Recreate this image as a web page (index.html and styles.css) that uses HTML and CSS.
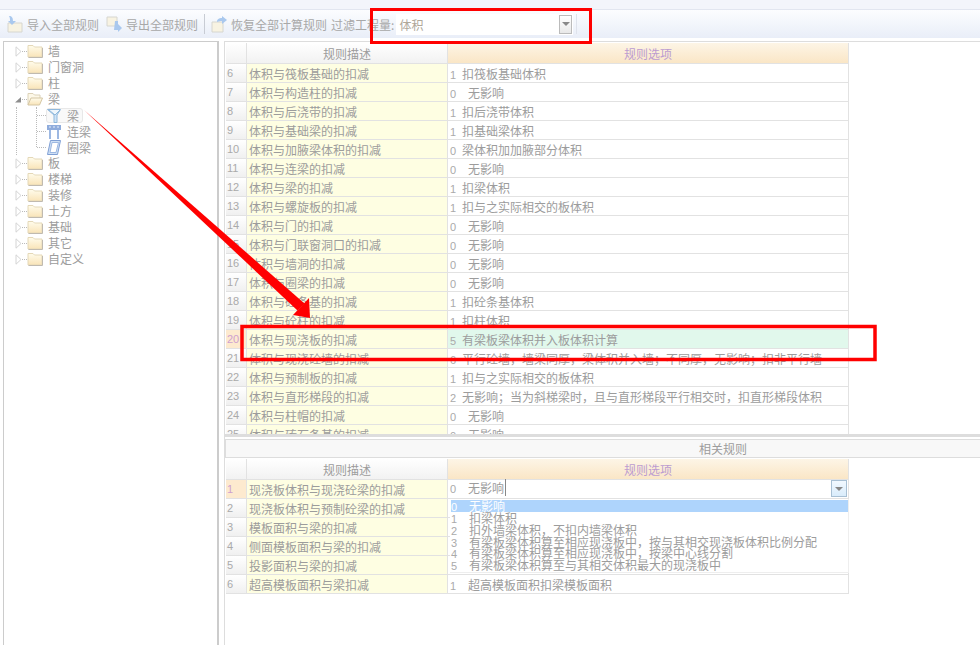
FILE: index.html
```html
<!DOCTYPE html>
<html lang="zh-CN">
<head>
    <meta charset="UTF-8">
    <title>计算规则</title>
    <link rel="stylesheet" href="styles.css">
</head>
<body>
    <svg class="defs" width="0" height="0">
        <defs>
            <linearGradient id="folderFill" x1="0" y1="0" x2="0" y2="1">
                <stop offset="0" stop-color="#fffcec"/>
                <stop offset="1" stop-color="#f9e4b8"/>
            </linearGradient>
            <symbol id="folder" viewBox="0 0 16 14">
                <path d="M1 3V1.500h5L7.500 3H15v10H1z" fill="url(#folderFill)" stroke="#e4d8b8"/>
                <path d="M1.500 13.500h14V4" fill="none" stroke="#c0bab0"/>
            </symbol>
            <symbol id="folderOpen" viewBox="0 0 16 14">
                <path d="M1 13V1.500h5L7.500 3H13v3" fill="#fdf8e8" stroke="#dcd2b8"/>
                <path d="M1 13l3-7h11.500l-3 7z" fill="url(#folderFill)" stroke="#d4c6a4"/>
            </symbol>
            <symbol id="closed" viewBox="0 0 7 11">
                <path d="M1 .8v9.400L6 5.500z" fill="#fff" stroke="#d4d4d4"/>
            </symbol>
        </defs>
    </svg>

    <div class="top-band"></div>

    <!-- Toolbar -->
    <div class="toolbar">
        <svg class="tool-icon" width="16" height="18" viewBox="0 0 16 18">
            <path d="M1 8h14v9H1z" fill="#f8f3e2" stroke="#d6d6d0"/>
            <path d="M2 1c3 0 4 2 4 5h3l-4 4-4-4h2c0-2 0-3-1-5z" fill="#a9c8ee"/>
        </svg>
        <span class="tool-text">导入全部规则</span>
        <svg class="tool-icon second" width="17" height="18" viewBox="0 0 17 18">
            <path d="M1 2h10v9H1z" fill="#f8f3e2" stroke="#d6d6d0"/>
            <path d="M9 6h3V9l4 4-4 4v-2H8z" fill="#a9c8ee"/>
        </svg>
        <span class="tool-text">导出全部规则</span>
        <span class="tool-sep"></span>
        <svg class="tool-icon third" width="16" height="18" viewBox="0 0 16 18">
            <path d="M1 7h11v10H1z" fill="#f8f3e2" stroke="#d6d6d0"/>
            <path d="M6 7c0-3 2-4 5-4V1l5 4-5 4V6C9 6 8 6 6 7z" fill="#a9c8ee"/>
        </svg>
        <span class="tool-text">恢复全部计算规则</span>
        <span class="tool-text filter-label">过滤工程量:</span>
        <div class="filter-combo">
            <span>体积</span>
            <span class="combo-btn"><b class="caret"></b></span>
        </div>
        <span class="tool-sep faint"></span>
    </div>

    <div class="main">
        <!-- Rule tree -->
        <div class="tree">
            <div class="node"><svg class="exp" width="7" height="11"><use href="#closed"/></svg><span class="dots"></span><svg class="fld" width="16" height="14"><use href="#folder"/></svg><span>墙</span></div>
            <div class="node"><svg class="exp" width="7" height="11"><use href="#closed"/></svg><span class="dots"></span><svg class="fld" width="16" height="14"><use href="#folder"/></svg><span>门窗洞</span></div>
            <div class="node"><svg class="exp" width="7" height="11"><use href="#closed"/></svg><span class="dots"></span><svg class="fld" width="16" height="14"><use href="#folder"/></svg><span>柱</span></div>
            <div class="node"><svg class="exp" width="7" height="11" viewBox="0 0 7 11"><path d="M0 8.500L6 3v5.500z" fill="#8d8d8d"/></svg><span class="dots"></span><svg class="fld" width="16" height="14"><use href="#folderOpen"/></svg><span>梁</span></div>
            <div class="children">
                <div class="leaves">
                    <div class="leaf">
                        <span class="hdots"></span>
                        <span class="leaf-box selected">
                            <svg width="14" height="15" viewBox="0 0 14 15"><path d="M.5 1.500h13L10 7v7.500H7V7z" fill="#cfe4f7" stroke="#8fb8dc"/><path d="M2 2l6 5 5-5" fill="#eef6fc" stroke="#8fb8dc"/></svg>
                            <span>梁</span>
                        </span>
                    </div>
                    <div class="leaf">
                        <span class="hdots"></span>
                        <span class="leaf-box">
                            <svg width="14" height="15" viewBox="0 0 14 15"><path d="M0 1h14v5H0z" fill="#8facdc"/><path d="M2 3h2M6 3h2M10 3h2" stroke="#e6eefa"/><path d="M3 6v9M11 6v9" stroke="#9db8e2" stroke-width="2"/></svg>
                            <span>连梁</span>
                        </span>
                    </div>
                    <div class="leaf">
                        <span class="hdots"></span>
                        <span class="leaf-box">
                            <svg width="14" height="15" viewBox="0 0 14 15"><path d="M3.500.5h10L10.500 14.500H.5z" fill="#cfe0f5" stroke="#7f9fd4"/><path d="M5 2.500h6.500L9 12.500H3z" fill="#fff" stroke="#9db8e2"/></svg>
                            <span>圈梁</span>
                        </span>
                    </div>
                </div>
            </div>
            <div class="node"><svg class="exp" width="7" height="11"><use href="#closed"/></svg><span class="dots"></span><svg class="fld" width="16" height="14"><use href="#folder"/></svg><span>板</span></div>
            <div class="node"><svg class="exp" width="7" height="11"><use href="#closed"/></svg><span class="dots"></span><svg class="fld" width="16" height="14"><use href="#folder"/></svg><span>楼梯</span></div>
            <div class="node"><svg class="exp" width="7" height="11"><use href="#closed"/></svg><span class="dots"></span><svg class="fld" width="16" height="14"><use href="#folder"/></svg><span>装修</span></div>
            <div class="node"><svg class="exp" width="7" height="11"><use href="#closed"/></svg><span class="dots"></span><svg class="fld" width="16" height="14"><use href="#folder"/></svg><span>土方</span></div>
            <div class="node"><svg class="exp" width="7" height="11"><use href="#closed"/></svg><span class="dots"></span><svg class="fld" width="16" height="14"><use href="#folder"/></svg><span>基础</span></div>
            <div class="node"><svg class="exp" width="7" height="11"><use href="#closed"/></svg><span class="dots"></span><svg class="fld" width="16" height="14"><use href="#folder"/></svg><span>其它</span></div>
            <div class="node"><svg class="exp" width="7" height="11"><use href="#closed"/></svg><span class="dots"></span><svg class="fld" width="16" height="14"><use href="#folder"/></svg><span>自定义</span></div>
        </div>

        <div class="rules">
            <!-- Rule grid -->
            <div class="upper">
                <table class="grid">
                    <colgroup><col class="c-num"><col class="c-desc"><col class="c-opt"></colgroup>
                    <thead>
                        <tr><th class="th-num"></th><th class="th-desc">规则描述</th><th class="th-opt">规则选项</th></tr>
                    </thead>
                    <tbody>
                        <tr><td class="num">6</td><td class="desc">体积与筏板基础的扣减</td><td class="opt"><i class="code">1</i>扣筏板基础体积</td></tr>
                        <tr><td class="num">7</td><td class="desc">体积与构造柱的扣减</td><td class="opt"><i class="code wide">0</i>无影响</td></tr>
                        <tr><td class="num">8</td><td class="desc">体积与后浇带的扣减</td><td class="opt"><i class="code">1</i>扣后浇带体积</td></tr>
                        <tr><td class="num">9</td><td class="desc">体积与基础梁的扣减</td><td class="opt"><i class="code">1</i>扣基础梁体积</td></tr>
                        <tr><td class="num">10</td><td class="desc">体积与加腋梁体积的扣减</td><td class="opt"><i class="code">0</i>梁体积加加腋部分体积</td></tr>
                        <tr><td class="num">11</td><td class="desc">体积与连梁的扣减</td><td class="opt"><i class="code wide">0</i>无影响</td></tr>
                        <tr><td class="num">12</td><td class="desc">体积与梁的扣减</td><td class="opt"><i class="code">1</i>扣梁体积</td></tr>
                        <tr><td class="num">13</td><td class="desc">体积与螺旋板的扣减</td><td class="opt"><i class="code">1</i>扣与之实际相交的板体积</td></tr>
                        <tr><td class="num">14</td><td class="desc">体积与门的扣减</td><td class="opt"><i class="code wide">0</i>无影响</td></tr>
                        <tr><td class="num">15</td><td class="desc">体积与门联窗洞口的扣减</td><td class="opt"><i class="code wide">0</i>无影响</td></tr>
                        <tr><td class="num">16</td><td class="desc">体积与墙洞的扣减</td><td class="opt"><i class="code wide">0</i>无影响</td></tr>
                        <tr><td class="num">17</td><td class="desc">体积与圈梁的扣减</td><td class="opt"><i class="code wide">0</i>无影响</td></tr>
                        <tr><td class="num">18</td><td class="desc">体积与砼条基的扣减</td><td class="opt"><i class="code">1</i>扣砼条基体积</td></tr>
                        <tr><td class="num">19</td><td class="desc">体积与砼柱的扣减</td><td class="opt"><i class="code">1</i>扣柱体积</td></tr>
                        <tr class="current"><td class="num">20</td><td class="desc">体积与现浇板的扣减</td><td class="opt"><i class="code">5</i>有梁板梁体积并入板体积计算</td></tr>
                        <tr><td class="num">21</td><td class="desc">体积与现浇砼墙的扣减</td><td class="opt"><i class="code">6</i>平行砼墙，墙梁同厚，梁体积并入墙；不同厚，无影响；扣非平行墙</td></tr>
                        <tr><td class="num">22</td><td class="desc">体积与预制板的扣减</td><td class="opt"><i class="code">1</i>扣与之实际相交的板体积</td></tr>
                        <tr><td class="num">23</td><td class="desc">体积与直形梯段的扣减</td><td class="opt"><i class="code">2</i>无影响；当为斜梯梁时，且与直形梯段平行相交时，扣直形梯段体积</td></tr>
                        <tr><td class="num">24</td><td class="desc">体积与柱帽的扣减</td><td class="opt"><i class="code wide">0</i>无影响</td></tr>
                        <tr><td class="num">25</td><td class="desc">体积与砖石条基的扣减</td><td class="opt"><i class="code wide">0</i>无影响</td></tr>
                    </tbody>
                </table>
            </div>

            <div class="splitter"></div>

            <!-- Related rules -->
            <div class="lower">
                <div class="related-bar">相关规则</div>
                <table class="grid">
                    <colgroup><col class="c-num"><col class="c-desc"><col class="c-opt"></colgroup>
                    <thead>
                        <tr><th class="th-num"></th><th class="th-desc">规则描述</th><th class="th-opt">规则选项</th></tr>
                    </thead>
                    <tbody>
                        <tr class="picked"><td class="num">1</td><td class="desc">现浇板体积与现浇砼梁的扣减</td><td class="opt editing"><i class="code wide">0</i><span class="edit-text">无影响</span><span class="edit-btn"><b class="caret"></b></span></td></tr>
                        <tr><td class="num">2</td><td class="desc">现浇板体积与预制砼梁的扣减</td><td class="opt"></td></tr>
                        <tr><td class="num">3</td><td class="desc">模板面积与梁的扣减</td><td class="opt"></td></tr>
                        <tr><td class="num">4</td><td class="desc">侧面模板面积与梁的扣减</td><td class="opt"></td></tr>
                        <tr><td class="num">5</td><td class="desc">投影面积与梁的扣减</td><td class="opt"></td></tr>
                        <tr><td class="num">6</td><td class="desc">超高模板面积与梁扣减</td><td class="opt"><i class="code wide">1</i>超高模板面积扣梁模板面积</td></tr>
                    </tbody>
                </table>
                <ul class="dropdown">
                    <li class="active"><i class="code wide">0</i>无影响</li>
                    <li><i class="code wide">1</i>扣梁体积</li>
                    <li><i class="code wide">2</i>扣外墙梁体积，不扣内墙梁体积</li>
                    <li><i class="code wide">3</i>有梁板梁体积算至相应现浇板中，按与其相交现浇板体积比例分配</li>
                    <li><i class="code wide">4</i>有梁板梁体积算至相应现浇板中，按梁中心线分割</li>
                    <li><i class="code wide">5</i>有梁板梁体积算至与其相交体积最大的现浇板中</li>
                </ul>
            </div>
        </div>
    </div>

    <!-- Red annotations drawn over the screenshot -->
    <svg class="marks" width="980" height="645" viewBox="0 0 980 645">
        <rect x="371.500" y="9.500" width="219" height="33" fill="none" stroke="#f00" stroke-width="3"/>
        <rect x="242" y="326.500" width="633" height="33" fill="none" stroke="#f00" stroke-width="3.500"/>
        <path d="M84 110L304.500 303.500 297.500 310.500z" fill="#f00"/>
        <path d="M310 318L293 315 309 298z" fill="#f00"/>
    </svg>
</body>
</html>
```

FILE: styles.css
```css
* { box-sizing: border-box; }
html, body { margin: 0; padding: 0; }
body { width: 980px; height: 645px; overflow: hidden; position: relative; background: #fff; color: #9c9c9c; font: 12px "Noto Sans CJK SC", "Liberation Sans", sans-serif; }
.defs { position: absolute; }

.top-band { height: 10px; background: #f3f5fb; border-bottom: 1px solid #e2e6f0; }

.toolbar { height: 28px; display: flex; align-items: center; padding-left: 7px; background: linear-gradient(#fcfdff, #e9eef8); }
.tool-icon { flex: none; margin-right: 4px; }
.tool-icon.second { margin-left: 7px; margin-right: 3px; }
.tool-icon.third { margin-left: 6px; margin-right: 4px; }
.tool-text { color: #a8a8a8; white-space: nowrap; }
.tool-sep { width: 1px; height: 20px; margin-left: 6px; background: #c8ccd4; }
.tool-sep.faint { margin-left: 3px; background: #dfe3ec; }
.filter-label { margin-left: 4px; }
.filter-combo { width: 177px; height: 21px; margin-left: 2px; display: flex; align-items: center; justify-content: space-between; padding: 0 1px 0 3px; background: #fff; color: #b0a89a; }
.combo-btn { width: 13px; height: 19px; display: flex; align-items: center; justify-content: center; border: 1px solid #bbb; background: linear-gradient(#fff, #e8e8e8); }
.caret { width: 0; height: 0; border: 4px solid transparent; border-top: 4px solid #888; border-bottom: 0; }

.main { display: flex; height: 607px; padding-top: 3px; }

.tree { width: 216px; margin-left: 3px; padding-top: 1px; border: 1px solid #ccc; border-right: 2px solid #ccc; border-bottom: 0; }
.node { height: 16px; display: flex; align-items: center; padding-left: 11px; line-height: 16px; }
.exp { flex: none; }
.dots { width: 5px; border-top: 1px dotted #bbb; }
.fld { flex: none; margin-right: 5px; }
.children { margin-left: 12px; height: 48px; border-left: 1px dotted #bbb; }
.leaves { height: 40px; margin-left: 19px; border-left: 1px dotted #bbb; }
.leaf { height: 16px; display: flex; align-items: center; }
.hdots { width: 9px; flex: none; border-top: 1px dotted #bbb; }
.leaf-box { display: flex; align-items: center; gap: 6px; height: 15px; padding-left: 1px; }
.leaf-box.selected { width: 37px; border: 1px solid #e8e8e8; border-radius: 3px; background: #f9f9f9; padding-left: 0; }

.rules { flex: 1; margin-left: 5px; border-top: 1px solid #ddd; border-left: 1px solid #ddd; }
.upper { height: 392px; padding: 1px 0 0 1px; overflow: hidden; }
.splitter { height: 3px; background: #ddd; }
.lower { position: relative; padding: 2px 0 0 1px; }
.related-bar { height: 19px; margin: 0 0 1px -1px; padding-left: 473px; line-height: 17px; background: #f8f8f8; border-top: 1px solid #ddd; border-bottom: 1px solid #ddd; border-left: 1px solid #ddd; }

.grid { width: 623px; table-layout: fixed; border-collapse: separate; border-spacing: 0; }
.c-num { width: 21px; }
.c-desc { width: 201px; }
.c-opt { width: 401px; }
.grid th { height: 21px; font-weight: normal; border-right: 1px solid #e2e2e2; border-bottom: 1px solid #e2e2e2; }
.th-num, .th-desc { background: linear-gradient(#fff, #f2f2f2); }
.th-opt { color: #bb9cd0; background: linear-gradient(#fdf5e6, #fae6c6); }
.grid td { height: 19px; padding: 0; line-height: 17px; white-space: nowrap; overflow: hidden; border-right: 1px solid #e2e2e2; border-bottom: 1px solid #e2e2e2; }
.grid td.num { padding-left: 1px; font: 11px/17px "Liberation Sans", sans-serif; color: #aaa; background: linear-gradient(#fff, #f0f0f0); }
.grid td.desc { padding-left: 2px; background: #fefee2; }
.grid td.opt { padding-left: 2px; }
.code { display: inline-block; width: 12px; font: 11px "Liberation Sans", sans-serif; color: #aaa; }
.code.wide { width: 18px; }

.current td.num, .picked td.num { color: #cfa0d0; background: #fdeacf; }
.current td.opt { background: #e1f8ec; }

.grid td.editing { position: relative; overflow: visible; padding-bottom: 2px; line-height: 16px; }
.edit-text { padding-right: 1px; border-right: 1px solid #888; }
.edit-btn { position: absolute; top: 0; right: 1px; width: 16px; height: 17px; display: flex; align-items: center; justify-content: center; border: 1px solid #a8c0d4; background: linear-gradient(#f2f9ff, #d9ecfb); }

.dropdown { position: absolute; left: 225px; top: 62px; width: 399px; height: 74px; margin: 0; padding: 1px 0 0 1px; list-style: none; background: #fff; border-bottom: 1px solid #eee; border-right: 1px solid #eee; }
.dropdown li { height: 11.800px; line-height: 11.800px; white-space: nowrap; }
.dropdown li.active { height: 12px; color: #fff; background: #aed4fc; }
.dropdown li.active .code { color: #fff; }

.marks { position: absolute; left: 0; top: 0; pointer-events: none; }
```
